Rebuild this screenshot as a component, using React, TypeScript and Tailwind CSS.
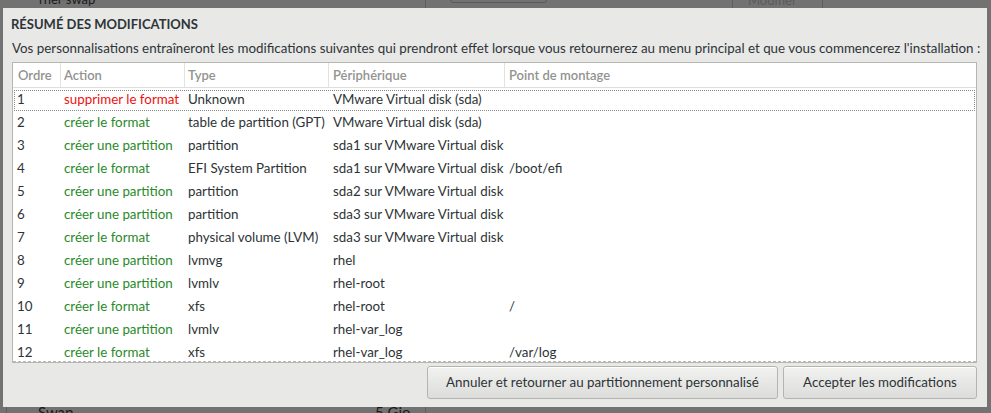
import React from "react";

type Row = { n: string; action: string; red?: boolean; type: string; dev: string; mount?: string };

const rows: Row[] = [
  { n: "1", action: "supprimer le format", red: true, type: "Unknown", dev: "VMware Virtual disk (sda)" },
  { n: "2", action: "créer le format", type: "table de partition (GPT)", dev: "VMware Virtual disk (sda)" },
  { n: "3", action: "créer une partition", type: "partition", dev: "sda1 sur VMware Virtual disk" },
  { n: "4", action: "créer le format", type: "EFI System Partition", dev: "sda1 sur VMware Virtual disk", mount: "/boot/efi" },
  { n: "5", action: "créer une partition", type: "partition", dev: "sda2 sur VMware Virtual disk" },
  { n: "6", action: "créer une partition", type: "partition", dev: "sda3 sur VMware Virtual disk" },
  { n: "7", action: "créer le format", type: "physical volume (LVM)", dev: "sda3 sur VMware Virtual disk" },
  { n: "8", action: "créer une partition", type: "lvmvg", dev: "rhel" },
  { n: "9", action: "créer une partition", type: "lvmlv", dev: "rhel-root" },
  { n: "10", action: "créer le format", type: "xfs", dev: "rhel-root", mount: "/" },
  { n: "11", action: "créer une partition", type: "lvmlv", dev: "rhel-var_log" },
  { n: "12", action: "créer le format", type: "xfs", dev: "rhel-var_log", mount: "/var/log" },
];

const font = { fontFamily: "Lato, 'Noto Sans', sans-serif" };

export default function App() {
  return (
    <div
      className="relative w-[991px] h-[413px] overflow-hidden bg-[#727272] pt-[8px] pl-[3px] text-[13.35px] text-[#2e3436]"
      style={font}
    >
      {/* dimmed background content */}
      <div className="absolute left-[39px] top-[-9px] text-[13px] text-[#1a1a1a] leading-[16px]">rhel-swap</div>
      <div className="absolute left-[425px] top-0 h-[8px] w-px bg-[#5e5e5e]" />
      <div className="absolute left-[450px] top-[-10px] h-[13px] w-[97px] rounded-[3px] border border-[#5a5a5a]" />
      <div className="absolute left-[732px] top-0 h-[8px] w-px bg-[#5e5e5e]" />
      <div className="absolute left-[822px] top-0 h-[8px] w-px bg-[#5e5e5e]" />
      <div className="absolute left-[748px] top-[-8px] text-[13px] text-[#5a5a5a] leading-[16px]">Modifier</div>
      <div className="absolute left-[6px] top-[407px] h-[6px] w-px bg-[#5e5e5e]" />
      <div className="absolute left-[425px] top-[407px] h-[6px] w-px bg-[#5e5e5e]" />
      <div className="absolute left-[38px] top-[403px] text-[15px] text-[#1a1a1a] leading-[18px]">Swap</div>
      <div className="absolute left-[375px] top-[403px] text-[15px] text-[#1a1a1a] leading-[18px]">5 Gio</div>

      <div className="relative flex h-[399px] w-[984px] flex-col bg-[#e8e8e7] pl-[8px] pr-[10px] pt-[7px] pb-[8px]">
        <div className="h-[18px] leading-[18px] text-[13px] font-bold text-[#2e3436]">RÉSUMÉ DES MODIFICATIONS</div>
        <div className="mt-[6px] h-[18px] leading-[18px] whitespace-nowrap pl-[1px] text-[#2e3436]">
          Vos personnalisations entraîneront les modifications suivantes qui prendront effet lorsque vous retournerez au menu principal et que vous commencerez l'installation :
        </div>
        <div className="ml-[1px] mt-[5px] h-[301px] overflow-hidden border border-[#b6b6b3] bg-white">
          <div className="grid h-[25px] grid-cols-[47px_124px_144px_176px_1fr] border-b border-[#dededc] font-semibold text-[13px] text-[#929390]">
            <div className="pl-[5px] leading-[24px]">Ordre</div>
            <div className="border-l border-[#e2e2e0] pl-[3px] leading-[24px]">Action</div>
            <div className="border-l border-[#e2e2e0] pl-[3px] leading-[24px]">Type</div>
            <div className="border-l border-[#e2e2e0] pl-[4px] leading-[24px]">Périphérique</div>
            <div className="border-l border-[#e2e2e0] pl-[4px] leading-[24px]">Point de montage</div>
          </div>
          <div className="relative h-[274px] overflow-hidden border-b border-dashed border-[#b9b9b7]">
            {rows.map((r, i) => (
              <div key={r.n} className="relative grid h-[23px] grid-cols-[47px_124px_144px_176px_1fr] items-center leading-[23px]">
                {i === 0 && (
                  <div className="pointer-events-none absolute left-[1px] right-[1px] top-[2px] bottom-0 border border-dotted border-[#8a8a8a]" />
                )}
                <div className="pl-[4px]">{r.n}</div>
                <div className={"whitespace-nowrap pl-[4px] " + (r.red ? "text-[#ee1111]" : "text-[#2a8a2a]")}>{r.action}</div>
                <div className="whitespace-nowrap pl-[4px]">{r.type}</div>
                <div className="whitespace-nowrap pl-[5px]">{r.dev}</div>
                <div className="whitespace-nowrap pl-[5px]">{r.mount ?? ""}</div>
              </div>
            ))}
          </div>
        </div>
        <div className="mt-[3px] flex justify-end gap-[5px]">
          <button className="h-[33px] w-[351px] rounded-[3px] border border-[#b4b4b2] bg-gradient-to-b from-[#f2f2f1] to-[#dcdcda] text-[#2e3436] shadow-[inset_0_1px_0_#ffffff]">
            Annuler et retourner au partitionnement personnalisé
          </button>
          <button className="h-[33px] w-[194px] rounded-[3px] border border-[#b4b4b2] bg-gradient-to-b from-[#f2f2f1] to-[#dcdcda] text-[#2e3436] shadow-[inset_0_1px_0_#ffffff]">
            Accepter les modifications
          </button>
        </div>
      </div>
    </div>
  );
}
